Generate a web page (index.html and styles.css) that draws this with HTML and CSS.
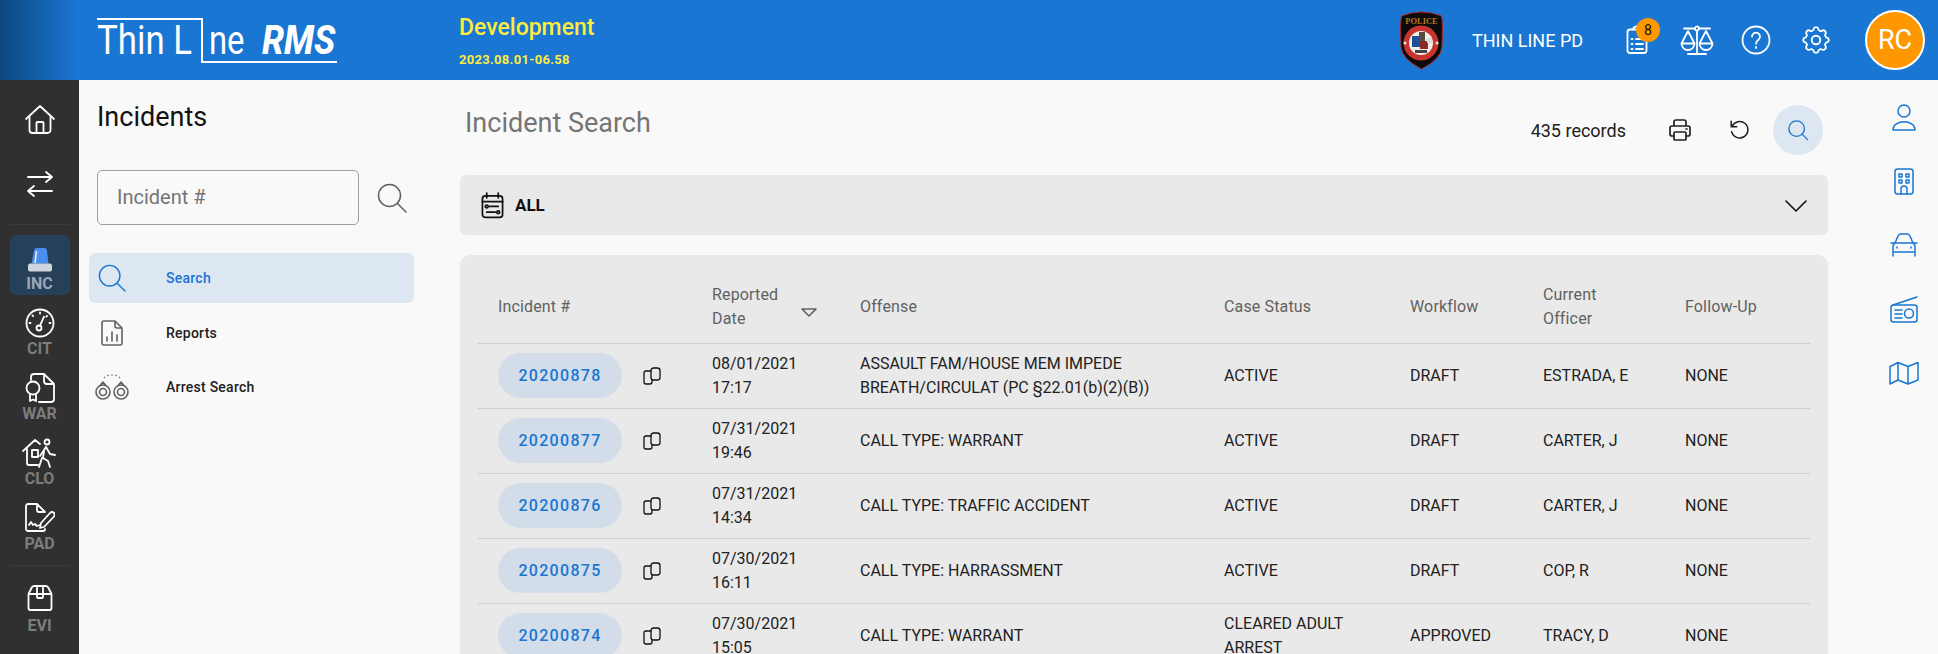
FILE: index.html
```html
<!DOCTYPE html>
<html lang="en">
<head>
<meta charset="utf-8">
<title>Incident Search</title>
<link rel="stylesheet" href="styles.css">
</head>
<body>
<header class="topbar">
  <a class="logo"><span class="logo-a"><span class="logo-t">Thin L</span></span><span class="logo-b"><span class="logo-n">ne</span><b>RMS</b></span></a>
  <div class="env"><div class="env-name">Development</div><div class="env-ver">2023.08.01-06.58</div></div>
  <div class="top-right">
    <svg class="shield" viewBox="0 0 43 59" width="43" height="59">
      <path d="M1.500 5 Q21.500 -3 41.500 5 Q43 10 42 36 Q41 48 21.500 58 Q2 48 1 36 Q0 10 1.500 5Z" fill="#0b0b0b" stroke="#b3262a" stroke-width="1"/>
      <text x="21.500" y="13" font-size="8.500" font-family="Liberation Serif" fill="#b9761c" text-anchor="middle" font-weight="700">POLICE</text>
      <circle cx="21" cy="32" r="17.500" fill="#c8352f"/>
      <circle cx="21" cy="32" r="12" fill="#f2efe9"/>
      <circle cx="5" cy="32" r="1.500" fill="#dfe8d8"/>
      <circle cx="37" cy="32" r="1.500" fill="#dfe8d8"/>
      <rect x="12" y="25" width="8" height="11" fill="#1f4f96"/>
      <rect x="20" y="30" width="8" height="8" fill="#8c2a26"/>
      <path d="M19 21h6v9h-6z" fill="#5b4a42"/>
      <path d="M27 27h5v5h-5z" fill="#ddd"/>
      <rect x="15" y="39" width="12" height="3" fill="#444"/>
    </svg>
    <span class="agency">THIN LINE PD</span>
    <span class="top-ico tasks">
      <svg viewBox="0 0 22 30" width="22" height="30" class="ln"><rect x="1.500" y="4.500" width="19" height="23.500" rx="2.500"/><path d="M7 4.500c0-4 8-4 8 0M5.500 14h1M10 14h7M5.500 19h1M10 19h7M5.500 24h1M10 24h7"/></svg>
      <span class="count">8</span>
    </span>
    <span class="top-ico scales">
      <svg viewBox="0 0 36 30" width="36" height="30" class="ln"><path d="M5 3.500h26M18 4v24M9 29h18"/><circle cx="18" cy="3.500" r="2" fill="#1976d2"/><path d="M9 6 2.500 18.500a6.500 6.500 0 0 0 13 0ZM2.500 18.500h13M27 6l-6.500 12.500a6.500 6.500 0 0 0 13 0ZM20.500 18.500h13"/></svg>
    </span>
    <span class="top-ico help">
      <svg viewBox="0 0 30 30" width="30" height="30" class="ln"><circle cx="15" cy="15" r="13.500"/><path d="M11 11.500a4 4 0 1 1 6.500 3.200c-1.700 1.200-2.500 2-2.500 4"/><path d="M15 22v1"/></svg>
    </span>
    <span class="top-ico gear">
      <svg viewBox="0 0 24 24" width="34" height="34" class="ln thin"><path d="M10.300 4.300c.4-1.800 3-1.800 3.400 0a1.700 1.700 0 0 0 2.600 1.100c1.500-.9 3.300.8 2.400 2.400a1.700 1.700 0 0 0 1 2.500c1.800.4 1.800 3 0 3.400a1.700 1.700 0 0 0-1 2.600c.9 1.500-.9 3.300-2.400 2.400a1.700 1.700 0 0 0-2.600 1c-.4 1.800-3 1.800-3.400 0a1.700 1.700 0 0 0-2.600-1c-1.500.9-3.300-.9-2.400-2.400a1.700 1.700 0 0 0-1-2.600c-1.800-.4-1.800-3 0-3.400a1.700 1.700 0 0 0 1-2.500c-.9-1.600.9-3.300 2.400-2.400a1.700 1.700 0 0 0 2.600-1.100Z"/><circle cx="12" cy="12" r="3"/></svg>
    </span>
    <span class="avatar">RC</span>
  </div>
</header>

<div class="body">
  <nav class="rail">
    <a class="rail-btn"><svg viewBox="0 0 32 30" width="32" height="30" class="ln"><path d="M2 15 16 2l14 13M5.500 13v13a3 3 0 0 0 3 3h15a3 3 0 0 0 3-3V13M12.500 29V19a1 1 0 0 1 1-1h5a1 1 0 0 1 1 1v10"/></svg></a>
    <a class="rail-btn"><svg viewBox="0 0 26 26" width="26" height="26" class="ln"><path d="M1 6h24M19 1l6 5-6 5M25 20H1M7 15l-6 5 6 5"/></svg></a>
    <div class="rail-sep"></div>
    <a class="rail-item active">
      <svg viewBox="0 0 24 24" width="24" height="24"><path d="M3.500 15.500 6 3a3 3 0 0 1 3-3h7a3 3 0 0 1 3 3l1.500 12.500Z" fill="#4a8ef0"/><path d="M8.500 3 7 15" stroke="#e7eef8" stroke-width="1.600" fill="none"/><rect x="0" y="15.500" width="24" height="8" rx="2" fill="#cfd6de"/></svg>
      <span>INC</span>
    </a>
    <a class="rail-item">
      <svg viewBox="0 0 30 30" width="30" height="30" class="ln"><circle cx="15" cy="15" r="13.500"/><path d="M15 4.500v1M7.500 7.500l.7.7M4.500 15h1M24.500 15h1M22 8l-.7.7"/><circle cx="14" cy="20" r="2.500"/><path d="m15 17.700 4-9"/></svg>
      <span>CIT</span>
    </a>
    <a class="rail-item">
      <svg viewBox="0 0 30 30" width="30" height="30" class="ln"><path d="M6 7V4a3 3 0 0 1 3-3h10l10 10v15a3 3 0 0 1-3 3H14M19 1v7a3 3 0 0 0 3 3h7"/><circle cx="8" cy="15" r="6.500"/><path d="M5 21v7l3-1.500 3 1.500v-7"/></svg>
      <span>WAR</span>
    </a>
    <a class="rail-item">
      <svg viewBox="0 0 36 30" width="36" height="30" class="ln"><path d="M1 13 13 2l5 4M5 11v14a2 2 0 0 0 2 2h9M10 12h6v7h-6z"/><circle cx="25" cy="4" r="2.500"/><path d="m24 9-6 9M24 9l4 7 5 1M22 13l-1 7 5 3 2 6M20 20l-3 9"/></svg>
      <span>CLO</span>
    </a>
    <a class="rail-item">
      <svg viewBox="0 0 30 30" width="30" height="30" class="ln"><path d="M20 26a2 2 0 0 1-2 2H3a2 2 0 0 1-2-2V3a2 2 0 0 1 2-2h9l8 8M12 1v6a2 2 0 0 0 2 2h6M4 22l2-3 2 3 2-1 2 2 3-1"/><path d="m16 20 9-10a2.500 2.500 0 0 1 4 3.500L19 24l-4 1Z"/></svg>
      <span>PAD</span>
    </a>
    <div class="rail-sep second"></div>
    <a class="rail-item evi">
      <svg viewBox="0 0 26 26" width="26" height="26" class="ln"><path d="M1.500 9V23a2 2 0 0 0 2 2h19a2 2 0 0 0 2-2V9M1.500 9l3-6a3 3 0 0 1 3-2h11a3 3 0 0 1 3 2l3 6ZM10 1v11a1 1 0 0 0 1 1h4a1 1 0 0 0 1-1V1"/></svg>
      <span>EVI</span>
    </a>
  </nav>

  <aside class="subnav">
    <h2 class="sub-title">Incidents</h2>
    <div class="sub-search">
      <input class="sub-input" placeholder="Incident #">
      <svg viewBox="0 0 30 30" width="30" height="30" class="ln grey1"><circle cx="12.500" cy="12.500" r="11"/><path d="m20.500 20.500 8.500 8.500"/></svg>
    </div>
    <ul class="menu">
      <li class="menu-item on">
        <span class="menu-ico"><svg viewBox="0 0 30 30" width="28" height="28" class="ln blue"><circle cx="12.500" cy="12.500" r="11"/><path d="m20.500 20.500 8.500 8.500"/></svg></span>
        <span class="menu-label">Search</span>
      </li>
      <li class="menu-item">
        <span class="menu-ico"><svg viewBox="0 0 22 26" width="22" height="26" class="ln grey2"><path d="M14 1H3a2 2 0 0 0-2 2v20a2 2 0 0 0 2 2h16a2 2 0 0 0 2-2V8ZM14 1v5a2 2 0 0 0 2 2h5M6 21v-4M11 21v-9M16 21v-6"/></svg></span>
        <span class="menu-label">Reports</span>
      </li>
      <li class="menu-item">
        <span class="menu-ico"><svg viewBox="0 0 34 26" width="34" height="26" class="ln grey2"><circle cx="8" cy="18" r="7"/><circle cx="8" cy="18" r="3.500"/><circle cx="26" cy="18" r="7"/><circle cx="26" cy="18" r="3.500"/><path d="M5.500 11 8 8l2.500 3M23.500 11 26 8l2.500 3M9.500 3.500v0M13 1.500v0M17 1v0M21 1.500v0M24.500 3.500v0"/></svg></span>
        <span class="menu-label">Arrest Search</span>
      </li>
    </ul>
  </aside>

  <main class="main">
    <div class="page-head">
      <h1 class="page-title">Incident Search</h1>
      <div class="page-tools">
        <span class="records">435 records</span>
        <svg viewBox="0 0 24 24" width="24" height="24" class="ln dark tool"><path d="M6 8V4a2 2 0 0 1 2-2h8a2 2 0 0 1 2 2v4M6 18H4a2 2 0 0 1-2-2v-6a2 2 0 0 1 2-2h16a2 2 0 0 1 2 2v6a2 2 0 0 1-2 2h-2"/><rect x="6" y="14" width="12" height="8" rx="1"/><path d="M18 11h1"/></svg>
        <svg viewBox="0 0 24 24" width="22" height="22" class="ln dark tool"><path d="M4.500 8A9 9 0 1 1 4 14M3.500 2.500v6h6"/></svg>
        <span class="tool-on"><svg viewBox="0 0 24 24" width="22" height="22" class="ln blue"><circle cx="10.500" cy="10.500" r="8.500"/><path d="m16.500 16.500 6 6"/></svg></span>
      </div>
    </div>

    <div class="filter">
      <svg viewBox="0 0 24 28" width="23" height="27" class="ln ink"><rect x="1.500" y="4" width="21" height="22.500" rx="3"/><path d="M6 1v5M18 1v5M1.500 10h21M9 15h9M6 21h9"/><circle cx="6" cy="15" r="1.500"/><circle cx="18" cy="21" r="1.500"/></svg>
      <span class="filter-label">ALL</span>
      <svg viewBox="0 0 22 12" width="22" height="12" class="ln ink chev"><path d="m1 1 10 10L21 1"/></svg>
    </div>

    <section class="panel">
      <table class="grid">
        <colgroup><col class="c1"><col class="c2"><col class="c3"><col class="c4"><col class="c5"><col class="c6"><col class="c7"></colgroup>
        <thead>
          <tr>
            <th class="first">Incident #</th>
            <th><span class="sort">Reported<br>Date<svg viewBox="0 0 16 9" width="16" height="9" class="ln grey2 tri"><path d="M1 1h14L8 8Z"/></svg></span></th>
            <th>Offense</th><th>Case Status</th><th>Workflow</th><th>Current<br>Officer</th><th>Follow-Up</th>
          </tr>
        </thead>
        <tbody>
          <tr>
            <td class="first"><div class="id-cell"><span class="pill">20200878</span><svg viewBox="0 0 18 18" width="18" height="18" class="ln ink copy"><rect x="8" y="1" width="9" height="12" rx="2.500"/><path d="M8 4H3a2 2 0 0 0-2 2v9a2 2 0 0 0 2 2h4a2 2 0 0 0 2-2v-2"/></svg></div></td>
            <td>08/01/2021<br>17:17</td><td>ASSAULT FAM/HOUSE MEM IMPEDE<br>BREATH/CIRCULAT (PC §22.01(b)(2)(B))</td><td>ACTIVE</td><td>DRAFT</td><td>ESTRADA, E</td><td>NONE</td>
          </tr>
          <tr>
            <td class="first"><div class="id-cell"><span class="pill">20200877</span><svg viewBox="0 0 18 18" width="18" height="18" class="ln ink copy"><rect x="8" y="1" width="9" height="12" rx="2.500"/><path d="M8 4H3a2 2 0 0 0-2 2v9a2 2 0 0 0 2 2h4a2 2 0 0 0 2-2v-2"/></svg></div></td>
            <td>07/31/2021<br>19:46</td><td>CALL TYPE: WARRANT</td><td>ACTIVE</td><td>DRAFT</td><td>CARTER, J</td><td>NONE</td>
          </tr>
          <tr>
            <td class="first"><div class="id-cell"><span class="pill">20200876</span><svg viewBox="0 0 18 18" width="18" height="18" class="ln ink copy"><rect x="8" y="1" width="9" height="12" rx="2.500"/><path d="M8 4H3a2 2 0 0 0-2 2v9a2 2 0 0 0 2 2h4a2 2 0 0 0 2-2v-2"/></svg></div></td>
            <td>07/31/2021<br>14:34</td><td>CALL TYPE: TRAFFIC ACCIDENT</td><td>ACTIVE</td><td>DRAFT</td><td>CARTER, J</td><td>NONE</td>
          </tr>
          <tr>
            <td class="first"><div class="id-cell"><span class="pill">20200875</span><svg viewBox="0 0 18 18" width="18" height="18" class="ln ink copy"><rect x="8" y="1" width="9" height="12" rx="2.500"/><path d="M8 4H3a2 2 0 0 0-2 2v9a2 2 0 0 0 2 2h4a2 2 0 0 0 2-2v-2"/></svg></div></td>
            <td>07/30/2021<br>16:11</td><td>CALL TYPE: HARRASSMENT</td><td>ACTIVE</td><td>DRAFT</td><td>COP, R</td><td>NONE</td>
          </tr>
          <tr>
            <td class="first"><div class="id-cell"><span class="pill">20200874</span><svg viewBox="0 0 18 18" width="18" height="18" class="ln ink copy"><rect x="8" y="1" width="9" height="12" rx="2.500"/><path d="M8 4H3a2 2 0 0 0-2 2v9a2 2 0 0 0 2 2h4a2 2 0 0 0 2-2v-2"/></svg></div></td>
            <td>07/30/2021<br>15:05</td><td>CALL TYPE: WARRANT</td><td>CLEARED ADULT<br>ARREST</td><td>APPROVED</td><td>TRACY, D</td><td>NONE</td>
          </tr>
        </tbody>
      </table>
    </section>
  </main>

  <aside class="side">
    <svg viewBox="0 0 24 27" width="24" height="27" class="ln blue"><circle cx="12" cy="7" r="6"/><path d="M1 26c0-11 22-11 22 0Z"/></svg>
    <svg viewBox="0 0 20 27" width="20" height="27" class="ln blue"><rect x="1" y="1" width="18" height="25" rx="2.500"/><path d="M5 6h3v3H5zM12 6h3v3h-3zM5 12h3v3H5zM12 12h3v3h-3zM7 26v-5a3 3 0 0 1 6 0v5"/></svg>
    <svg viewBox="0 0 28 24" width="28" height="24" class="ln blue"><path d="M1 10h26M3 23V14a4 4 0 0 1 2-4l3-7a3 3 0 0 1 3-2h6a3 3 0 0 1 3 2l3 7a4 4 0 0 1 2 4v9M3 19h22"/><path d="M7 14v1M21 14v1"/></svg>
    <svg viewBox="0 0 28 27" width="28" height="27" class="ln blue"><rect x="1" y="9" width="26" height="17" rx="2.500"/><path d="M3 9 27 1M5 14h7M5 18h7M5 22h7"/><circle cx="19" cy="17.500" r="4.500"/></svg>
    <svg viewBox="0 0 30 24" width="30" height="24" class="ln blue"><path d="M1 5.500 9 1.500l10 4 10-4v17.500l-10 4-10-4-8 4ZM9 1.500V19M19 5.500V23"/></svg>
  </aside>
</div>
</body>
</html>
```

FILE: styles.css
```css
* { box-sizing: border-box; }
html, body { margin: 0; height: 100%; overflow: hidden; }
body {
  display: flex;
  flex-direction: column;
  background: #f9f9f9;
  font-family: Roboto, "Liberation Sans", sans-serif;
  color: #212121;
}
svg { display: block; flex: none; }
.ln { fill: none; stroke: #fff; stroke-width: 1.800; stroke-linecap: round; stroke-linejoin: round; }
.ln.thin { stroke-width: 1.300; }
.ln.blue { stroke: #1976d2; stroke-width: 1.500; }
.ln.grey1 { stroke: #616161; stroke-width: 1.500; }
.ln.grey2 { stroke: #616161; stroke-width: 1.600; }
.ln.dark { stroke: #212121; stroke-width: 1.700; }
.ln.ink { stroke: #111; }

/* top bar */
.topbar {
  flex: none;
  height: 80px;
  display: flex;
  align-items: flex-start;
  padding-left: 97px;
  background: linear-gradient(90deg, #0c4680 0, #1976d2 78px);
  color: #fff;
}
.logo {
  display: flex;
  margin-top: 18px;
  height: 45px;
  font-weight: 400;
  font-size: 40px;
  line-height: 41px;
  color: #fff;
}
.logo-a { display: block; flex: none; width: 104px; height: 45px; border-top: 2px solid #fff; white-space: pre; }
.logo-t { display: inline-block; transform: scaleX(.87); transform-origin: left center; }
.logo-b { display: flex; flex: none; width: 136px; height: 45px; border-left: 2px solid #fff; border-bottom: 2px solid #fff; padding-top: 2px; padding-left: 6px; white-space: pre; }
.logo-n { display: block; flex: none; width: 53px; transform: scaleX(.82); transform-origin: left center; }
.logo-b b { display: block; flex: none; font-weight: 800; font-style: italic; transform: scaleX(.88); transform-origin: left center; }
.env { margin-left: 122px; padding-top: 14px; color: #ffeb3b; }
.env-name { font-size: 23px; line-height: 27px; font-weight: 500; }
.env-ver { margin-top: 11px; font-size: 13px; line-height: 16px; font-weight: 700; letter-spacing: .3px; }
.top-right { margin-left: auto; display: flex; align-items: center; height: 80px; padding-right: 13px; }
.agency { margin-left: 29px; font-size: 18px; width: 154px; }
.top-ico { display: block; position: relative; }
.tasks { width: 22px; }
.count {
  position: absolute; left: 10px; top: -7px;
  width: 24px; height: 24px; border-radius: 50%;
  background: #ff9800; color: #111; font-size: 14px; line-height: 24px; text-align: center;
}
.scales { margin-left: 31px; }
.help { margin-left: 26px; }
.gear { margin-left: 28px; }
.avatar {
  margin-left: 32px; width: 60px; height: 60px; border-radius: 50%;
  background: #ff9800; border: 2px solid #fff; color: #fff;
  font-size: 27px; line-height: 56px; text-align: center;
}

/* layout */
.body { flex: 1; min-height: 0; display: flex; }
.rail { flex: none; width: 79px; background: #303030; display: flex; flex-direction: column; align-items: center; padding-top: 24px; }
.rail-btn { flex: none; height: 30px; display: flex; align-items: center; margin-bottom: 35px; }
.rail-btn + .rail-btn { margin-bottom: 0; }
.rail-sep { flex: none; width: 60px; height: 1px; background: #3c3c3c; margin-top: 25px; }
.rail-sep.second { margin-top: -2px; }
.rail-item { flex: none; width: 60px; height: 65px; display: flex; flex-direction: column; align-items: center; padding-top: 1px; }
.rail-item svg { height: 30px; }
.rail-item span { font-size: 16px; font-weight: 700; line-height: 20px; color: #7d7d7d; margin-top: 1px; }
.rail-item.active { height: 60px; margin-top: 10px; margin-bottom: 12px; border-radius: 6px; background: #27405a; padding-top: 13px; }
.rail-item.active svg { height: 24px; }
.rail-item.active span { color: #9aa7b4; margin-top: 2px; }
.rail-item.evi { margin-top: 16px; }
.rail-item.evi span { margin-top: 3px; }

/* subnav */
.subnav { flex: none; width: 361px; padding: 0 26px 0 10px; }
.sub-title { margin: 19px 0 0 8px; font-size: 27px; line-height: 36px; font-weight: 400; color: #111; }
.sub-search { display: flex; align-items: center; margin: 35px 0 28px 8px; height: 55px; }
.sub-input {
  width: 262px; height: 55px; padding: 0 19px 2px;
  border: 1px solid #9e9e9e; border-radius: 5px; background: transparent;
  font-family: inherit; font-size: 20px; outline: 0;
}
.sub-input::placeholder { color: #757575; opacity: 1; }
.sub-search svg { margin-left: 18px; }
.menu { list-style: none; margin: 0; padding: 0; display: flex; flex-direction: column; gap: 4.500px; }
.menu-item { height: 50px; display: flex; align-items: center; border-radius: 6px; font-size: 14px; font-weight: 500; letter-spacing: .25px; color: #212121; }
.menu-ico { flex: none; width: 46px; display: flex; justify-content: center; }
.menu-label { margin-left: 31px; }
.menu-item.on { background: #dde7f2; color: #1976d2; }

/* main */
.main { flex: 1; min-width: 0; padding-left: 20px; padding-right: 42px; }
.page-head { height: 95px; display: flex; justify-content: space-between; }
.page-title { margin: 25px 0 0 5px; font-size: 27px; line-height: 36px; font-weight: 400; color: #757575; }
.page-tools { display: flex; align-items: center; height: 50px; margin-top: 25px; padding-right: 5px; }
.records { font-size: 18px; color: #212121; margin-right: 42px; }
.tool { margin-right: 36px; }
.tool + .tool { margin-right: 23px; }
.tool-on { width: 50px; height: 50px; border-radius: 50%; background: #dde7f2; display: flex; align-items: center; justify-content: center; }
.filter { height: 60px; margin-bottom: 20px; padding: 0 21px; display: flex; align-items: center; background: #e9e9e9; border-radius: 6px; }
.filter-label { margin-left: 11px; font-size: 17px; font-weight: 700; color: #111; }
.chev { margin-left: auto; margin-top: 2px; stroke-width: 1.600; }
.panel { background: #e9e9e9; border-radius: 10px; padding: 0 18px; }
.grid { width: 100%; border-collapse: collapse; table-layout: fixed; }
.c1 { width: 234px; } .c2 { width: 148px; } .c3 { width: 364px; } .c4 { width: 186px; } .c5 { width: 133px; } .c6 { width: 142px; }
.grid th {
  height: 88px; padding: 17px 0 0; text-align: left; vertical-align: middle;
  font-size: 16px; line-height: 24px; font-weight: 400; letter-spacing: .15px; color: #616161;
  border-bottom: 1px solid #cfcfcf;
}
.sort { display: block; position: relative; }
.tri { position: absolute; left: 89px; top: 25px; }
.grid td {
  height: 65px; padding: 0; vertical-align: middle;
  font-size: 16px; line-height: 24px; color: #212121;
  border-bottom: 1px solid #cfcfcf;
}
.grid .first { padding-left: 20px; }
.id-cell { display: flex; align-items: center; }
.pill { width: 124px; height: 45px; border-radius: 23px; background: #d3dde9; color: #1976d2; font-size: 16px; font-weight: 500; letter-spacing: 1.300px; line-height: 45px; text-align: center; }
.copy { margin-left: 21px; stroke-width: 1.300; }

/* right rail */
.side { flex: none; width: 68px; display: grid; grid-auto-rows: 64px; place-items: center; align-content: start; padding-top: 5px; }
```
